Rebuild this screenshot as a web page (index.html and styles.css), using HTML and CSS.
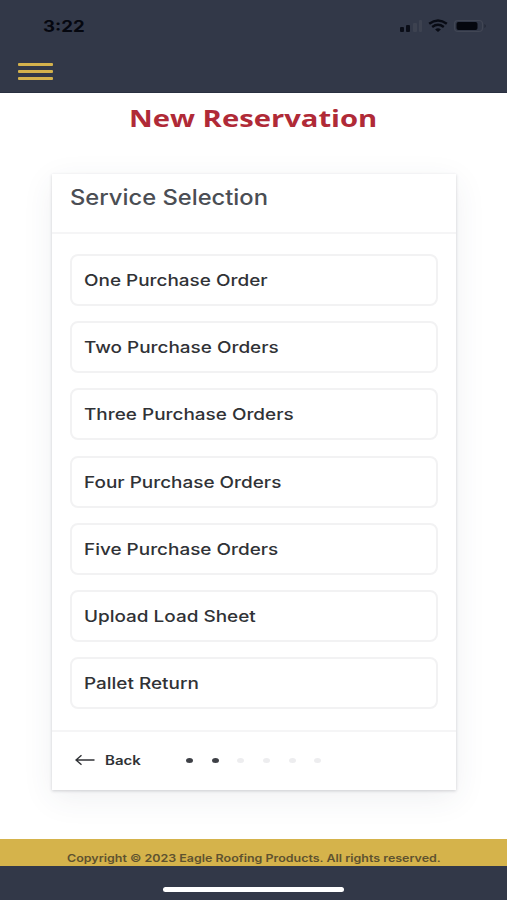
FILE: index.html
```html
<!DOCTYPE html>
<html lang="en">
<head>
<meta charset="utf-8">
<title>New Reservation</title>
<link rel="stylesheet" href="styles.css">
</head>
<body>
<header class="top">
  <div class="status">
    <span class="time wide">3:22</span>
    <svg class="indicators" width="88" height="16" viewBox="0 0 88 16">
      <g fill="#0b0e18"><rect x="0" y="9" width="4" height="5" rx="1"/><rect x="6" y="7" width="4" height="7" rx="1"/></g>
      <g fill="#3d4250"><rect x="13" y="5" width="4" height="9" rx="1"/><rect x="19" y="2" width="3" height="12" rx="1"/></g>
      <g fill="none" stroke="#080b14" stroke-width="2.4"><path d="M29.2 5.8Q38 -1 46.8 5.8"/><path d="M32.2 9Q38 4.6 43.8 9"/></g>
      <path fill="#080b14" d="M35.1 11.4Q38 9.2 40.9 11.4L38 14Z"/>
      <rect x="54.5" y="2.5" width="28" height="11" rx="3.5" fill="none" stroke="#414654" stroke-width="1.2"/>
      <rect x="56.5" y="4" width="21" height="8" rx="2" fill="#05070e"/>
      <path d="M84.5 6Q87 8 84.5 10Z" fill="#202532"/>
    </svg>
  </div>
  <div class="menu"><i></i><i></i><i></i></div>
</header>
<main>
  <h1><span class="wide">New Reservation</span></h1>
  <section class="card">
    <h2><span class="wide">Service Selection</span></h2>
    <div class="options">
      <div class="option"><span class="wide">One Purchase Order</span></div>
      <div class="option"><span class="wide">Two Purchase Orders</span></div>
      <div class="option"><span class="wide">Three Purchase Orders</span></div>
      <div class="option"><span class="wide">Four Purchase Orders</span></div>
      <div class="option"><span class="wide">Five Purchase Orders</span></div>
      <div class="option"><span class="wide">Upload Load Sheet</span></div>
      <div class="option"><span class="wide">Pallet Return</span></div>
    </div>
    <div class="nav">
      <svg class="arrow" width="20" height="12" viewBox="0 0 20 12" fill="none" stroke="#303236" stroke-width="1.4"><path d="M19.5 6H1M6.5 1.3L1 6L6.5 10.7"/></svg>
      <span class="back"><span class="wide">Back</span></span>
      <div class="dots"><i class="on"></i><i class="on"></i><i></i><i></i><i></i><i></i></div>
    </div>
  </section>
</main>
<footer>
  <div class="copy"><span class="wide">Copyright © 2023 Eagle Roofing Products. All rights reserved.</span></div>
  <div class="home"><i></i></div>
</footer>
</body>
</html>
```
FILE: styles.css
```css
* { box-sizing: border-box; }
body {
  margin: 0;
  height: 900px;
  display: flex;
  flex-direction: column;
  overflow: hidden;
  background: #fff;
  font-family: Inter, "Liberation Sans", sans-serif;
}
h1, h2 { margin: 0; }
/* letterforms are drawn wider than the font's natural proportions */
.wide {
  display: inline-block;
  white-space: nowrap;
  transform: scaleX(1.2);
  transform-origin: left center;
}
h1 .wide { transform: scaleX(1.27); }
h2 .wide { transform: scaleX(1.13); }
.option .wide { transform: scaleX(1.183); }
.copy .wide { transform: scaleX(1.187); }
.top { height: 93px; flex: none; background: #323848; border-bottom: 1px solid #292f40; }
.status { height: 52px; display: flex; justify-content: space-between; padding: 18px 19px 0 43px; }
.time { font-size: 15.5px; font-weight: 700; line-height: 18px; color: #05070f; }
.menu { width: 35px; margin: 10.5px 0 0 18px; display: grid; gap: 4.2px; }
.menu i { height: 3px; border-radius: 1px; background: #d4b24c; }
main { height: 745.5px; flex: none; }
h1 {
  padding-left: 129px;
  height: 81px;
  font: 700 23px/51px "Open Sans", sans-serif;
  color: #b02a37;
}
.card {
  width: 404px;
  height: 616px;
  margin-left: 52px;
  background: #fff;
  box-shadow: 0 1px 3px rgba(40, 45, 60, .2), 0 8px 30px rgba(50, 60, 90, .08);
}
h2 {
  height: 60px;
  padding-left: 18px;
  border-bottom: 2px solid #f5f5f6;
  font-size: 21px;
  font-weight: 500;
  line-height: 47px;
  color: #4b4e54;
}
.options { height: 496px; padding: 20px 18px 0; display: flex; flex-direction: column; gap: 15.2px; }
.option {
  height: 52px;
  flex: none;
  padding-left: 11.5px;
  border: 2px solid #f2f2f3;
  border-radius: 8px;
  font-size: 16px;
  font-weight: 500;
  line-height: 49px;
  color: #303236;
}
.nav { height: 60px; border-top: 2px solid #f5f5f6; display: flex; align-items: center; padding: 0 0 2px 23px; }
.back { width: 81px; margin-left: 10px; font-size: 12.5px; font-weight: 600; color: #303236; }
.dots { display: flex; gap: 18.7px; }
.dots i { width: 7px; height: 5px; border-radius: 50%; background: #ededef; }
.dots .on { background: #3e4046; }
footer { flex: 1; background: #323848; }
.copy {
  height: 27.5px;
  padding: 12px 0 0 67px;
  background: #d5b34b;
  font-size: 10.5px;
  font-weight: 600;
  line-height: 16px;
  color: #5e522f;
}
.home { padding: 21px 0 0 163px; }
.home i { display: block; width: 181px; height: 5px; border-radius: 3px; background: #fff; }
```
